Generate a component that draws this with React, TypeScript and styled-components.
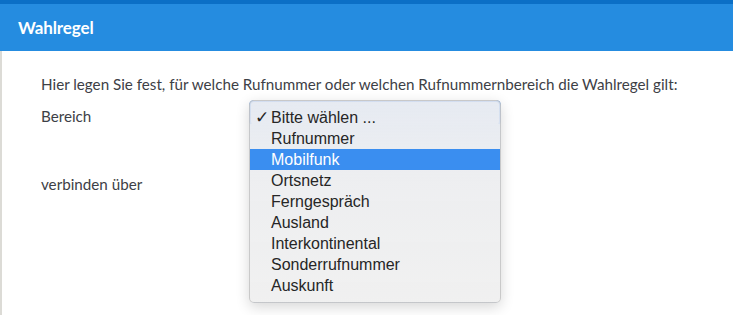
import React, { useState } from "react";
import styled, { createGlobalStyle } from "styled-components";

const options = [
  "Bitte wählen ...",
  "Rufnummer",
  "Mobilfunk",
  "Ortsnetz",
  "Ferngespräch",
  "Ausland",
  "Interkontinental",
  "Sonderrufnummer",
  "Auskunft",
];

const App: React.FC = () => {
  const [selected] = useState<number>(0);
  const [hovered, setHovered] = useState<number>(2);

  return (
    <>
      <GlobalStyle />
      <SPage>
        <SHeader>
          <STitle>Wahlregel</STitle>
        </SHeader>
        <SContent>
          <SIntro>
            Hier legen Sie fest, für welche Rufnummer oder welchen
            Rufnummernbereich die Wahlregel gilt:
          </SIntro>
          <SRow>
            <SLabel>Bereich</SLabel>
            <SSelectWrap>
              <SSelect />
              <SMenu>
                {options.map((opt, i) => (
                  <SOption
                    key={opt}
                    active={i === hovered}
                    onMouseEnter={() => setHovered(i)}
                  >
                    <SCheck>{i === selected ? "✓" : ""}</SCheck>
                    {opt}
                  </SOption>
                ))}
              </SMenu>
            </SSelectWrap>
          </SRow>
          <SRow>
            <SLabel>verbinden über</SLabel>
          </SRow>
        </SContent>
      </SPage>
    </>
  );
};

const GlobalStyle = createGlobalStyle`
  body {
    margin: 0;
    background: #ffffff;
    font-family: Lato, "Open Sans", sans-serif;
  }
`;

const SPage = styled.div`
  width: 733px;
  height: 315px;
  overflow: hidden;
  border-top: 4px solid #0b6fc6;
  box-sizing: border-box;
`;

const SHeader = styled.div`
  height: 47px;
  background: #258ce0;
  display: flex;
  align-items: center;
  padding-left: 18px;
`;

const STitle = styled.h1`
  margin: 0;
  color: #ffffff;
  font-family: Lato, sans-serif;
  font-size: 17px;
  font-weight: 700;
  letter-spacing: -0.1px;
`;

const SContent = styled.div`
  border-left: 2px solid #dcdbd6;
  height: 264px;
  padding: 23px 0 0 39px;
`;

const SIntro = styled.p`
  margin: 0 0 11px;
  color: #3d4046;
  font-size: 15.2px;
  line-height: 20px;
`;

const SRow = styled.div`
  display: flex;
  align-items: flex-start;
  height: 68px;
`;

const SLabel = styled.div`
  width: 208px;
  color: #3d4046;
  font-size: 15.2px;
  line-height: 22px;
`;

const SSelectWrap = styled.div`
  position: relative;
  width: 252px;
  margin-top: -5px;
`;

const SSelect = styled.div`
  height: 22px;
  border-radius: 5px;
  border: 2px solid #6fa5ef;
  border-bottom-color: #ffffff;
  background: #ffffff;
`;

const SMenu = styled.div`
  position: absolute;
  top: 0;
  left: 0;
  width: 252px;
  box-sizing: border-box;
  padding: 6px 0;
  border-radius: 5px;
  border: 1px solid rgba(170, 170, 170, 0.55);
  background: linear-gradient(
    to bottom,
    rgba(226, 231, 240, 0.86),
    rgba(237, 238, 240, 0.97) 40%,
    rgba(240, 240, 240, 0.98)
  );
  box-shadow: 0 4px 14px rgba(0, 0, 0, 0.16);
  font-family: "Liberation Sans", Arial, sans-serif;
  font-size: 16px;
`;

const SOption = styled.div<{ active: boolean }>`
  display: flex;
  align-items: center;
  height: 21px;
  color: ${(p) => (p.active ? "#ffffff" : "#262626")};
  background: ${(p) => (p.active ? "#3a8ef0" : "transparent")};
  cursor: default;
`;

const SCheck = styled.span`
  width: 21px;
  padding-left: 5px;
  box-sizing: border-box;
  font-family: "DejaVu Sans", sans-serif;
  font-size: 17px;
  line-height: 21px;
`;

export default App;
